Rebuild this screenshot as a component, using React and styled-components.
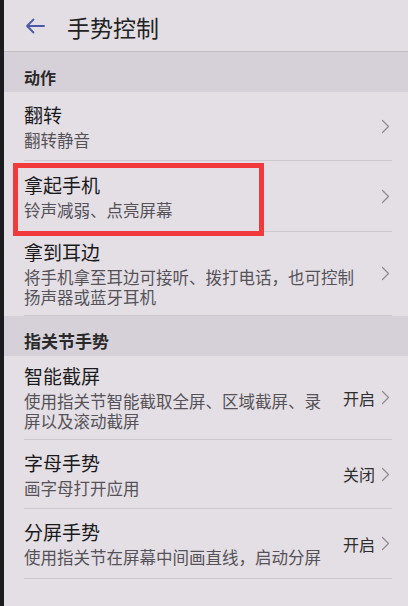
import styled, { createGlobalStyle } from "styled-components";

const GlobalStyle = createGlobalStyle`
  html, body {
    margin: 0;
    padding: 0;
    background: #e4dfe5;
  }
  body {
    font-family: "Noto Sans CJK SC", "Noto Sans", sans-serif;
  }
`;

const Phone = styled.div`
  display: flex;
  width: 408px;
  height: 606px;
  overflow: hidden;
  background: #e4dfe5;
`;
const Bezel = styled.div`
  width: 4px;
  flex: none;
  background: #1c1c1e;
`;
const Screen = styled.div`
  flex: 1;
  display: flex;
  flex-direction: column;
`;

const Header = styled.div`
  height: 51px;
  display: flex;
  align-items: center;
  gap: 21px;
  padding-left: 20px;
  border-bottom: 1px solid #c4bfc6;
  background: #e2dee4;
`;
const Back = styled.div`
  width: 22px;
  height: 22px;
  display: flex;
  align-items: center;
  justify-content: center;
  color: #4b5aa8;
`;
const Title = styled.div`
  font-size: 23px;
  color: #222;
  line-height: 30px;
  margin-top: 2px;
`;

const SectionHead = styled.div`
  height: ${(p) => p.$h}px;
  box-sizing: border-box;
  padding: ${(p) => p.$pt}px 0 0 20px;
  background: #d6d1d8;
  font-size: ${(p) => p.$fs}px;
  line-height: 22px;
  color: #2a2a2a;
  font-weight: 700;
`;

const Row = styled.div`
  position: relative;
  display: flex;
  align-items: center;
  gap: 16px;
  min-height: ${(p) => p.$h}px;
  box-sizing: border-box;
  padding: 8px 0;
  margin: 0 16px 0 20px;
  border-bottom: 1px solid #cdc8cf;
`;
const Text = styled.div`
  flex: 1;
  min-width: 0;
  display: flex;
  flex-direction: column;
  gap: 3px;
`;
const ItemTitle = styled.div`
  font-size: 19px;
  line-height: 24px;
  color: #1a1a1a;
`;
const ItemSub = styled.div`
  font-size: 16.5px;
  line-height: 20px;
  color: #555258;
`;
const Trail = styled.div`
  display: flex;
  align-items: center;
  gap: 6px;
  flex: none;
`;
const Value = styled.span`
  font-size: 16px;
  color: #2e2e2e;
`;
const Chevron = styled.svg`
  width: 9px;
  height: 15px;
  color: #908c92;
  margin-right: 2px;
`;

const Highlight = styled.div`
  position: absolute;
  left: -11px;
  top: 2px;
  width: 251px;
  height: 73px;
  box-sizing: border-box;
  border: 5px solid #f03a3c;
  pointer-events: none;
`;

const Arrow = () => (
  <svg width="20" height="16" viewBox="0 0 20 16" fill="none">
    <path d="M19 8H2M8.5 1.5L2 8l6.5 6.5" stroke="currentColor" strokeWidth="1.8" strokeLinecap="round" strokeLinejoin="round" />
  </svg>
);

const Chev = () => (
  <Chevron viewBox="0 0 9 15" fill="none">
    <path d="M1.5 1.5L7.5 7.5l-6 6" stroke="currentColor" strokeWidth="1.3" strokeLinecap="round" strokeLinejoin="round" />
  </Chevron>
);

const Item = ({ title, sub, value, h = 70, marked }) => (
  <Row $h={h}>
    {marked && <Highlight />}
    <Text>
      <ItemTitle>{title}</ItemTitle>
      <ItemSub>{sub}</ItemSub>
    </Text>
    <Trail>
      {value && <Value>{value}</Value>}
      <Chev />
    </Trail>
  </Row>
);

export default function App() {
  return (
    <>
      <GlobalStyle />
      <Phone>
        <Bezel />
        <Screen>
          <Header>
            <Back>
              <Arrow />
            </Back>
            <Title>手势控制</Title>
          </Header>
          <SectionHead $h={40} $pt={14} $fs={16}>动作</SectionHead>
          <Item title="翻转" sub="翻转静音" h={69} />
          <Item title="拿起手机" sub="铃声减弱、点亮屏幕" h={71} marked />
          <Item title="拿到耳边" sub="将手机拿至耳边可接听、拨打电话，也可控制扬声器或蓝牙耳机" />
          <SectionHead $h={40} $pt={14} $fs={17}>指关节手势</SectionHead>
          <Item title="智能截屏" sub="使用指关节智能截取全屏、区域截屏、录屏以及滚动截屏" value="开启" />
          <Item title="字母手势" sub="画字母打开应用" value="关闭" h={69} />
          <Item title="分屏手势" sub="使用指关节在屏幕中间画直线，启动分屏" value="开启" h={70} />
        </Screen>
      </Phone>
    </>
  );
}
